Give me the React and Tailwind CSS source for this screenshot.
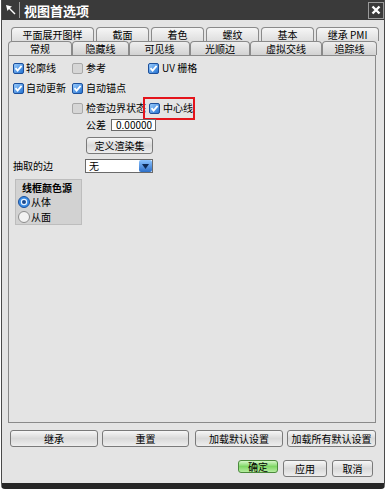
import React from "react";

const font = { fontFamily: '"Noto Sans CJK SC", "Noto Sans", sans-serif' };

function Check({ on }) {
  return (
    <svg width="11" height="11" viewBox="0 0 11 11" className="shrink-0">
      <defs>
        <linearGradient id="cbg" x1="0" y1="0" x2="1" y2="1">
          <stop offset="0" stopColor="#9fd0ff" />
          <stop offset="1" stopColor="#1f6fd0" />
        </linearGradient>
      </defs>
      {on ? (
        <>
          <rect x="0.5" y="0.5" width="10" height="10" rx="1.5" fill="url(#cbg)" stroke="#1d4f9a" />
          <path d="M2.5 5.2 L4.6 7.6 L8.6 2.8" fill="none" stroke="#fff" strokeWidth="1.8" />
        </>
      ) : (
        <rect x="0.5" y="0.5" width="10" height="10" rx="1.5" fill="#d6d6d6" stroke="#a8a8a8" />
      )}
    </svg>
  );
}

function Radio({ on }) {
  return (
    <svg width="12" height="12" viewBox="0 0 12 12" className="shrink-0">
      {on ? (
        <>
          <circle cx="6" cy="6" r="5.5" fill="#3c8ee6" stroke="#1d4f9a" />
          <circle cx="6" cy="6" r="3.2" fill="#e8f3ff" />
          <circle cx="6" cy="6" r="2" fill="#1a4a90" />
        </>
      ) : (
        <circle cx="6" cy="6" r="5.5" fill="#f2f2f2" stroke="#8c8c8c" />
      )}
    </svg>
  );
}

function Tab({ w, label, active, light }) {
  return (
    <div
      className={`h-[14px] flex items-center justify-center rounded-t-[4px] border border-b-0 border-[#8a8a8a] text-[10px] leading-none text-black ${
        active ? "bg-[#e4e4e4]" : light ? "bg-gradient-to-b from-[#f6f6f6] to-[#dedede]" : "bg-gradient-to-b from-[#eeeeee] to-[#d2d2d2]"
      }`}
      style={{ width: w }}
    >
      {label}
    </div>
  );
}

function Btn({ w, label, className = "" }) {
  return (
    <div
      className={`h-[17px] flex items-center justify-center rounded-[3px] border border-[#7a7a7a] bg-gradient-to-b from-[#f7f7f7] via-[#d9d9d9] to-[#eeeeee] text-[10px] leading-none text-black ${className}`}
      style={{ width: w }}
    >
      {label}
    </div>
  );
}

export default function App() {
  return (
    <div className="w-[391px] h-[495px] bg-white" style={font}>
      <div className="ml-[1px] w-[384px] h-[489px] border-l border-r border-[#4a4a4a] bg-[#e4e4e4] rounded-b-[4px] border-b-[6px] border-b-[#262626] flex flex-col">
        {/* title bar */}
        <div className="h-[20px] bg-[#3a3a3a] flex items-center">
          <div className="w-[17px] h-[20px] flex items-center justify-center">
            <svg width="12" height="12" viewBox="0 0 12 12">
              <path d="M1 1 L7 2.5 L5 4 L10.5 9.5 L9.5 10.5 L4 5 L2.5 7 Z" fill="#fff" />
            </svg>
          </div>
          <div className="w-[1px] h-[16px] bg-[#9a9a9a]" />
          <span className="ml-[4px] text-[13px] font-bold text-white leading-none">视图首选项</span>
          <div className="ml-auto w-[16px] h-[17px] border border-[#9a9a9a] flex items-center justify-center">
            <svg width="10" height="10" viewBox="0 0 10 10">
              <path d="M1.5 1.5 L8.5 8.5 M8.5 1.5 L1.5 8.5" stroke="#fff" strokeWidth="2.4" />
            </svg>
          </div>
        </div>

        <div className="pl-[6px] pt-[7px]">
          {/* tabs row 1 */}
          <div className="flex gap-[2px] ml-[3px]">
            <Tab w={83} label="平面展开图样" light />
            <Tab w={53} label="截面" light />
            <Tab w={53} label="着色" light />
            <Tab w={53} label="螺纹" light />
            <Tab w={53} label="基本" light />
            <Tab w={63} label="继承 PMI" light />
          </div>
          {/* tabs row 2 */}
          <div className="flex">
            <Tab w={64} label="常规" active />
            <Tab w={57} label="隐藏线" />
            <Tab w={61} label="可见线" />
            <Tab w={60} label="光顺边" />
            <Tab w={72} label="虚拟交线" />
            <Tab w={55} label="追踪线" />
          </div>

          {/* panel */}
          <div className="w-[368px] h-[368px] border border-[#8a8a8a] pt-[2px] pl-[4px] text-[10px] leading-none text-black">
            <div className="h-[20px] flex items-center">
              <div className="w-[59px] flex items-center gap-[2px]">
                <Check on />
                <span>轮廓线</span>
              </div>
              <div className="w-[76px] flex items-center gap-[3px]">
                <Check />
                <span>参考</span>
              </div>
              <div className="flex items-center gap-[3px]">
                <Check on />
                <span>UV 栅格</span>
              </div>
            </div>
            <div className="h-[20px] flex items-center">
              <div className="w-[59px] flex items-center gap-[2px]">
                <Check on />
                <span className="whitespace-nowrap">自动更新</span>
              </div>
              <div className="flex items-center gap-[3px]">
                <Check on />
                <span>自动锚点</span>
              </div>
            </div>
            <div className="h-[20px] flex items-center">
              <div className="w-[59px]" />
              <div className="w-[70px] flex items-center gap-[3px]">
                <Check />
                <span className="whitespace-nowrap">检查边界状态</span>
              </div>
              <div className="ml-[1px] h-[23px] w-[52px] border-2 border-[#e4141b] flex items-center pl-[4px] gap-[3px]">
                <Check on />
                <span>中心线</span>
              </div>
            </div>
            <div className="h-[14px] flex items-center pl-[73px]">
              <span>公差</span>
              <div className="ml-[5px] w-[45px] h-[12px] bg-white border border-[#6a6a6a] flex items-center pl-[4px]">
                <span className="text-[10px] whitespace-nowrap">0.00000</span>
              </div>
            </div>
            <div className="mt-[5px] pl-[73px]">
              <Btn w={67} label="定义渲染集" className="h-[15px]" />
            </div>
            <div className="mt-[5px] h-[14px] flex items-center">
              <span className="w-[72px]">抽取的边</span>
              <div className="w-[68px] h-[14px] bg-white border border-[#6a6a6a] flex items-center">
                <span className="pl-[3px]">无</span>
                <div className="ml-auto w-[13px] h-[12px] rounded-[2px] bg-gradient-to-b from-[#8cc4ff] to-[#2c6fc8] flex items-center justify-center">
                  <svg width="7" height="5" viewBox="0 0 7 5">
                    <path d="M0 0 H7 L3.5 5 Z" fill="#0d2a55" />
                  </svg>
                </div>
              </div>
            </div>
            <div className="mt-[6px] ml-[2px] w-[67px] h-[46px] bg-[#d2d2d2] border border-[#bdbdbd] pl-[2px]">
              <div className="pl-[4px] pt-[3px] h-[15px] font-bold">线框颜色源</div>
              <div className="h-[14px] flex items-center gap-[1px]">
                <Radio on />
                <span>从体</span>
              </div>
              <div className="h-[15px] flex items-center gap-[1px]">
                <Radio />
                <span>从面</span>
              </div>
            </div>
          </div>

          {/* bottom buttons */}
          <div className="mt-[7px] flex ml-[2px] gap-[4px]">
            <Btn w={88} label="继承" />
            <Btn w={87} label="重置" />
            <Btn w={88} label="加载默认设置" className="ml-[2px]" />
            <Btn w={89} label="加载所有默认设置" />
          </div>
          <div className="mt-[13px] flex justify-end gap-[5px] pr-[11px]">
            <div className="w-[40px] h-[13px] flex items-center justify-center rounded-[3px] border border-[#4b8a3c] bg-gradient-to-b from-[#d6f7c8] via-[#7fd765] to-[#b5ec9e] text-[10px] leading-none text-black">
              确定
            </div>
            <Btn w={44} label="应用" className="h-[13px]" />
            <Btn w={41} label="取消" className="h-[13px]" />
          </div>
        </div>
      </div>
    </div>
  );
}
